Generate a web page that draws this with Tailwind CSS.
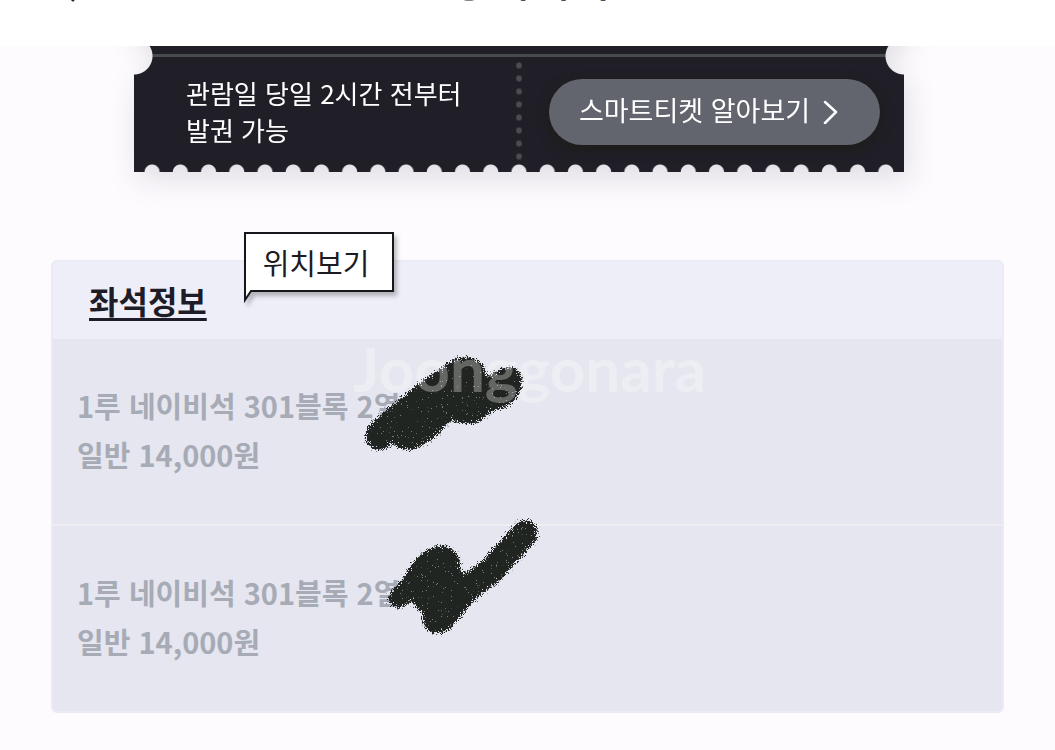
<!DOCTYPE html>
<html lang="ko">
<head>
<meta charset="utf-8">
<meta name="viewport" content="width=device-width, initial-scale=1">
<title>상세내역</title>
<script src="https://cdn.jsdelivr.net/npm/@tailwindcss/browser@4"></script>
</head>
<body class="min-h-screen overflow-x-hidden bg-[#fefbff] font-['Noto_Sans_CJK_KR',sans-serif] text-[#1e1c27]">
<header class="relative z-10 flex h-[46px] items-start overflow-hidden bg-white px-[50px]">
  <button type="button" aria-label="뒤로" class="-mt-[36px]">
    <svg class="h-10 w-7" viewBox="0 0 28 40" fill="none" stroke="#25232c" stroke-width="3" stroke-linecap="round"><path d="M23 36 6 18 23 2"/></svg>
  </button>
  <h1 class="-mt-[50px] flex-1 pr-6 text-center text-[44px] leading-[56px] font-medium">상세내역</h1>
</header>

<main>
  <section class="overflow-hidden pr-[68px] pb-[60px] pl-[51px]">
    <div class="mx-auto -mt-10 max-w-[770px] drop-shadow-[4px_10px_14px_rgba(20,20,30,0.12)]">
      <div class="bg-[#201f28] [mask-image:radial-gradient(circle_at_0_50px,transparent_18px,black_19px),radial-gradient(circle_at_100%_50px,transparent_18px,black_19px),radial-gradient(circle_at_50%_100%,transparent_7px,black_8px)] [mask-size:100%_100%,100%_100%,3.665%_100%] [mask-repeat:no-repeat,no-repeat,repeat-x] [mask-position:0_0,0_0,4px_0] [mask-composite:intersect] pt-12">
        <div class="h-[3px] bg-[#474b4b]"></div>
        <div class="flex h-[115px]">
          <p class="w-1/2 pt-[17px] pl-[52px] text-[26px] leading-[37px] text-white">관람일 당일 2시간 전부터<br>발권 가능</p>
          <div class="mt-0.5 -ml-[3px] h-[104px] w-[6px] bg-[radial-gradient(circle,#4b4b50_2px,transparent_4px)] bg-[length:6px_13px]"></div>
          <div class="flex-1 pt-[22px] pr-6 pl-[27px]">
            <button type="button" class="flex h-[66px] w-full items-center justify-center gap-3 rounded-full bg-[#62656d] pr-3 text-[27px] text-white shadow-[0_4px_8px_4px_#1e1e1e]">
              <span class="pb-1">스마트티켓 알아보기</span>
              <svg class="h-6 w-4" viewBox="0 0 16 24" fill="none" stroke="currentColor" stroke-width="2.5" stroke-linecap="round" stroke-linejoin="round"><path d="M3 2 14 12 3 23"/></svg>
            </button>
          </div>
        </div>
      </div>
    </div>
  </section>

  <section class="px-[51px]">
    <div class="relative mt-7 rounded-md border-2 border-[#ebebf5] bg-[#e5e6ef]">
      <div class="flex h-[77px] rounded-t bg-[#eeeef8] pl-9">
        <h2 class="pt-[15px] text-[32px] leading-[46px] font-bold underline decoration-[3px] underline-offset-4">좌석정보</h2>
      </div>
      <button type="button" class="absolute -top-[31px] left-[191px] h-[72px] w-[156px] text-[29px] text-[#1c1b22]">
        <svg class="absolute inset-0 h-[72px] w-[156px] drop-shadow-[3px_4px_2px_rgba(0,0,0,0.25)]" viewBox="0 0 156 72" fill="white" stroke="#15171c" stroke-width="2"><path d="M1 2H149V60H7L1 69Z"/></svg>
        <span class="relative block h-[70px] pr-3 leading-[60px]">위치보기</span>
      </button>
      <ul class="text-[29px] leading-[49px] font-bold text-[#a7abb6]">
        <li class="h-[187px] border-b-2 border-[#eeeef1] pt-[42px] pl-6">1루 네이비석 301블록 2열<br>일반 14,000원</li>
        <li class="h-[185px] pt-[42px] pl-6">1루 네이비석 301블록 2열<br>일반 14,000원</li>
      </ul>
      <svg class="pointer-events-none absolute top-[84px] left-[307px] h-[300px] w-[200px]" viewBox="360 346 200 300">
        <defs>
          <filter id="brush" x="-10%" y="-10%" width="120%" height="120%" color-interpolation-filters="sRGB">
            <feTurbulence type="fractalNoise" baseFrequency="0.8" numOctaves="2" seed="4"/>
            <feColorMatrix values="0 0 0 0 0  0 0 0 0 0  0 0 0 0 0  2 0 0 0 -0.5" result="noise"/>
            <feGaussianBlur in="SourceAlpha" stdDeviation="2.5" result="soft"/>
            <feComposite in="soft" in2="noise" operator="arithmetic" k1="0" k2="1.2" k3="-1" k4="-0.12"/>
            <feComponentTransfer result="edge"><feFuncA type="linear" slope="7"/></feComponentTransfer>
            <feFlood flood-color="#212522"/>
            <feComposite in2="edge" operator="in"/>
          </filter>
        </defs>
        <g filter="url(#brush)" stroke="#212522" stroke-width="1">
          <path d="M366 434C367 426 373 421 379 416L418 384 445 365C454 358 464 355 474 359 484 363 488 371 485 380 492 373 502 367 511 367 521 369 524 379 521 388 518 399 509 408 499 409 493 408 488 415 480 421 474 425 463 425 451 420 441 432 427 446 413 449 404 452 397 448 393 442 388 449 380 452 372 448 367 445 365 440 366 434Z"/>
          <path d="M388 597C391 591 399 584 404 577 413 562 421 549 437 546 448 544 457 550 460 561L461 575C477 567 486 558 495 547L513 527C519 519 528 518 534 524 540 530 538 539 531 547L510 569C499 585 487 588 477 598L449 629C442 636 430 635 425 627 422 621 423 614 424 613 418 612 414 604 412 600 407 605 401 609 394 607 389 604 387 601 388 597Z"/>
        </g>
      </svg>
      <div class="pointer-events-none absolute inset-x-0 top-[71px] pl-1 text-center font-['Lato',sans-serif] text-[62px] leading-[70px] font-bold text-white/30">Joonggonara</div>
    </div>
  </section>
</main>
</body>
</html>
